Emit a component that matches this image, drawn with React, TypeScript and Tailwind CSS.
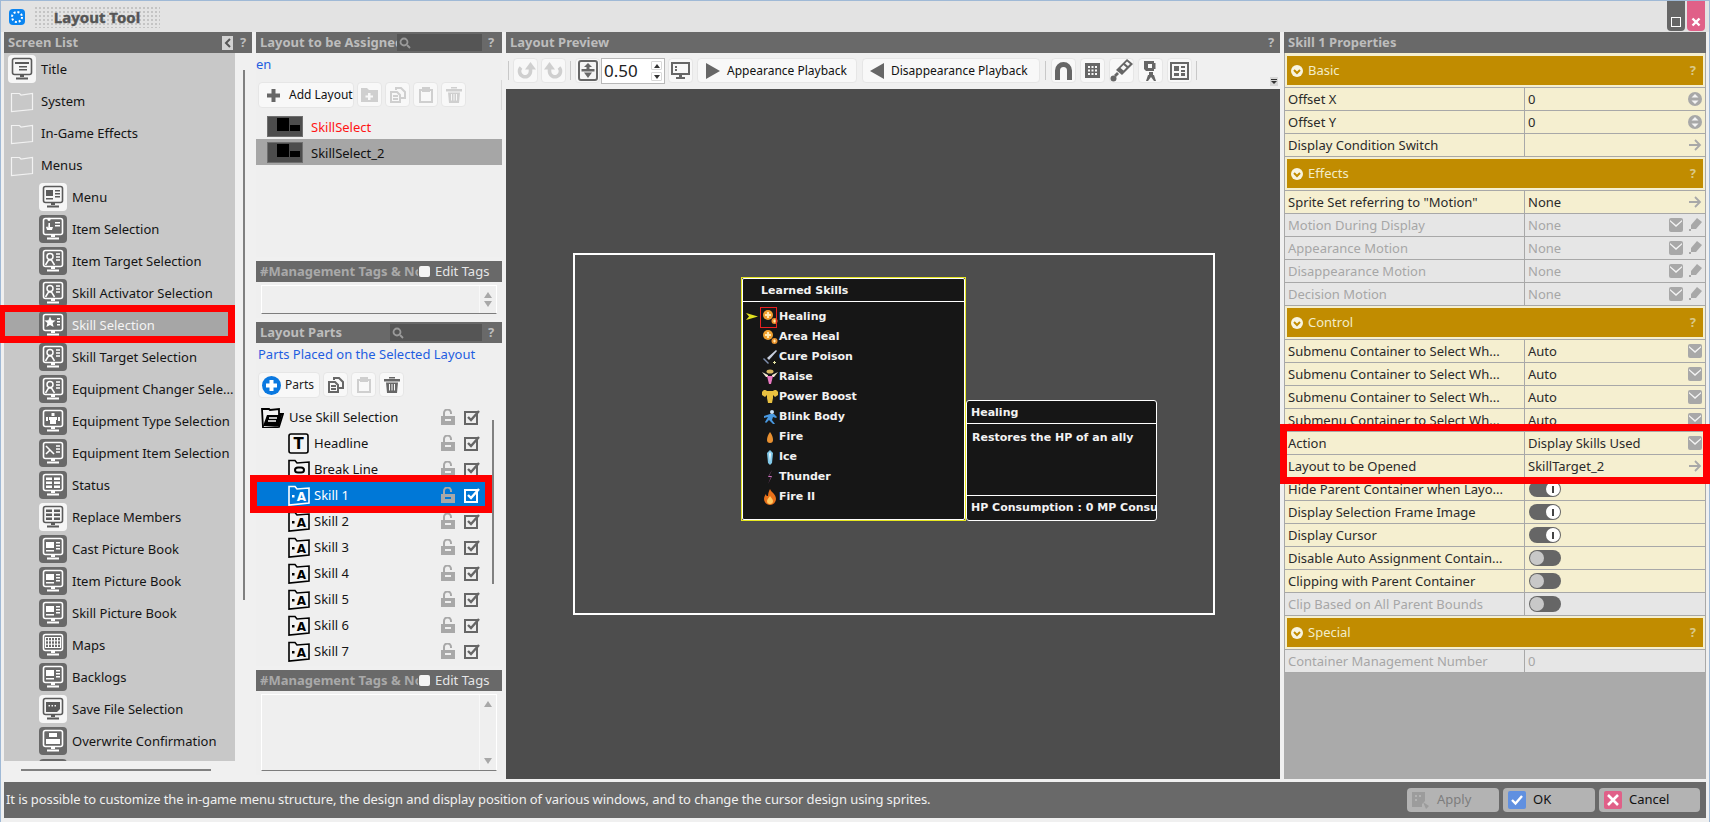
import { ReactNode } from "react";

const uiFont = "font-['Noto_Sans',sans-serif]";

type MonitorKind = "title" | "menu" | "item" | "person" | "star" | "equip" | "sword" | "table" | "book" | "grid" | "save" | "over";

const screens: { label: string; kind?: MonitorKind; light?: boolean; child?: boolean; selected?: boolean }[] = [
  { label: "Title", kind: "title", light: true },
  { label: "System" },
  { label: "In-Game Effects" },
  { label: "Menus" },
  { label: "Menu", kind: "menu", light: true, child: true },
  { label: "Item Selection", kind: "item", child: true },
  { label: "Item Target Selection", kind: "person", child: true },
  { label: "Skill Activator Selection", kind: "person", child: true },
  { label: "Skill Selection", kind: "star", child: true, selected: true },
  { label: "Skill Target Selection", kind: "person", child: true },
  { label: "Equipment Changer Sele...", kind: "person", child: true },
  { label: "Equipment Type Selection", kind: "equip", child: true },
  { label: "Equipment Item Selection", kind: "sword", child: true },
  { label: "Status", kind: "table", child: true },
  { label: "Replace Members", kind: "table", light: true, child: true },
  { label: "Cast Picture Book", kind: "book", child: true },
  { label: "Item Picture Book", kind: "book", child: true },
  { label: "Skill Picture Book", kind: "book", child: true },
  { label: "Maps", kind: "grid", child: true },
  { label: "Backlogs", kind: "book", child: true },
  { label: "Save File Selection", kind: "save", light: true, child: true },
  { label: "Overwrite Confirmation", kind: "over", child: true },
  { label: "", kind: "over", child: true },
];

function MonitorTile({ kind, light }: { kind: MonitorKind; light?: boolean }) {
  const ink = light ? "#5a5a5a" : "#ffffff";
  const bg = light ? "#f6f6f6" : "#696969";
  return (
    <svg width="28" height="28" viewBox="0 0 28 28" className="shrink-0">
      <rect width="28" height="28" rx="4" fill={bg} />
      <rect x="4.5" y="3.5" width="19" height="16" rx="2" fill="none" stroke={ink} strokeWidth="1.6" />
      <path d="M12 20h4v2h-4z" fill={ink} />
      <rect x="8" y="22.5" width="12" height="2" fill={ink} />
      {kind === "title" && <path d="M7 7h14v2H7zM11 11h8v1.5h-8zM11 14h8v1.5h-8z" fill={ink} />}
      {kind === "menu" && <path d="M7 7h7v6H7zM16 7h5v1.6h-5zM16 10h5v1.6h-5zM16 13h5v1.6h-5zM7 15h7v1.6H7z" fill={ink} />}
      {kind === "item" && <path d="M10 6a1.6 1.6 0 1 1 .01 0M9.5 8h1.5v4h3l-1 3H8l-1-3 1.4-.6.8 1.6zM16 7h5v1.5h-5zM16 10h5v1.5h-5z" fill={ink} />}
      {kind === "person" && (
        <g fill="none" stroke={ink} strokeWidth="1.5">
          <circle cx="11" cy="9.5" r="3" />
          <path d="M6.5 18l3-5h3l3 5" />
          <path d="M17 7h4M17 10h4M17 13h4" />
        </g>
      )}
      {kind === "star" && (
        <g fill={ink}>
          <path d="M11 5.5l1.6 3.7 4 .3-3 2.6 1 3.9-3.6-2.1-3.6 2.1 1-3.9-3-2.6 4-.3z" />
          <path d="M18 7h3v1.5h-3zM18 10h3v1.5h-3zM18 13h3v1.5h-3z" />
        </g>
      )}
      {kind === "equip" && <path d="M12.5 6h3v3h-3zM10 10h8v3h-1v4h-6v-4h-1zM7 10h2v4H7zM19 10h2v4h-2z" fill={ink} />}
      {kind === "sword" && (
        <g fill="none" stroke={ink} strokeWidth="1.6">
          <path d="M7 7l8 8M7 15l4-4" />
          <path d="M17 7h4M17 10h4M17 13h4" />
        </g>
      )}
      {kind === "table" && <path d="M7 6.5h6v2.5H7zM15 6.5h6v2.5h-6zM7 10.5h6V13H7zM15 10.5h6V13h-6zM7 14.5h6V17H7zM15 14.5h6V17h-6z" fill={ink} />}
      {kind === "book" && <path d="M7 7h8v6H7zM17 7h4v1.5h-4zM17 10h4v1.5h-4zM17 13h4v1.5h-4zM7 15h8v1.5H7z" fill={ink} />}
      {kind === "grid" && (
        <g fill="none" stroke={ink} strokeWidth="1">
          <rect x="6.5" y="6.5" width="15" height="10" />
          <path d="M9.5 6.5v10M12.5 6.5v10M15.5 6.5v10M18.5 6.5v10M6.5 9.8h15M6.5 13.2h15" />
        </g>
      )}
      {kind === "save" && <path d="M7 7h14v7l-3 3H7zM9.5 10h1.5v1.5H9.5zM12.5 10H14v1.5h-1.500zM15.500 10H17v1.500h-1.500z" fill={ink} fillRule="evenodd" />}
      {kind === "over" && <path d="M10 6h8v4h-8zM7 12h14v5H7z" fill={ink} />}
    </svg>
  );
}

function FolderOutline() {
  return (
    <svg width="24" height="24" viewBox="0 0 24 24" className="shrink-0">
      <path d="M1.500 4.500h8l1.500 1.500 11.500-1.500v16l-21 2z" fill="none" stroke="#f2f2f2" strokeWidth="1.200" />
    </svg>
  );
}

function PanelHeader({ title, children, help = true }: { title: string; children?: ReactNode; help?: boolean }) {
  return (
    <div className="flex h-[21px] shrink-0 items-center bg-[#696969] pl-1">
      <span className="whitespace-nowrap pt-px text-[13px] font-bold text-[#bdbdbd]">{title}</span>
      <div className="ml-auto flex items-center">
        {children}
        {help && <span className="w-[18px] text-center text-[13px] font-bold text-[#bdbdbd]">?</span>}
      </div>
    </div>
  );
}

function SearchBox({ width }: { width: string }) {
  return (
    <div className={`flex h-[17px] items-center bg-[#555555] pl-[2px] ${width}`}>
      <svg width="12" height="12" viewBox="0 0 12 12" fill="none" stroke="#9a9a9a" strokeWidth="1.800">
        <circle cx="5" cy="5" r="3.500" />
        <path d="M8 8l3 3" />
      </svg>
    </div>
  );
}

function TagPanel({ boxHeight, arrowsApart }: { boxHeight: string; arrowsApart?: boolean }) {
  return (
    <div className="flex flex-col bg-[#efefef]">
      <div className="flex h-[21px] items-center bg-[#696969] pl-1">
        <span className="w-[158px] overflow-hidden whitespace-nowrap pt-px text-[13px] font-bold text-[#a9a9a9]">#Management Tags &amp; Notes</span>
        <span className="ml-[1px] h-[11px] w-[11px] rounded-[2px] bg-[#f4f4f4]" />
        <span className="ml-[5px] text-[13px] text-[#e6e6e6]">Edit Tags</span>
      </div>
      <div className={`mx-[5px] mb-[4px] mt-[3px] flex border border-white border-b-[#7d7d7d] ${boxHeight}`}>
        <div className="flex-1" />
        <div className={`flex w-[17px] flex-col items-center border-l border-[#f8f8f8] py-[6px] ${arrowsApart ? "justify-between" : "justify-center gap-[3px]"}`}>
          <span className="h-0 w-0 border-x-[4px] border-b-[6px] border-x-transparent border-b-[#a8a8a8]" />
          <span className="h-0 w-0 border-x-[4px] border-t-[6px] border-x-transparent border-t-[#a8a8a8]" />
        </div>
      </div>
    </div>
  );
}

function ToolTile({ children, w = "w-[25px]", dim }: { children: ReactNode; w?: string; dim?: boolean }) {
  return (
    <div className={`flex h-[25px] shrink-0 items-center justify-center rounded-[4px] border border-[#e6e6e6] bg-[#f8f8f8] ${w} ${dim ? "text-[#cfcfcf]" : "text-[#666666]"}`}>
      {children}
    </div>
  );
}

const PlusIcon = () => (
  <svg width="15" height="15" viewBox="0 0 15 15" fill="currentColor">
    <path d="M5.500 1h4v4.500H14v4H9.500V14h-4V9.500H1v-4h4.500z" />
  </svg>
);
const FolderPlusIcon = () => (
  <svg width="17" height="15" viewBox="0 0 17 15" fill="currentColor">
    <path d="M0 1h6l2 2h9v12H0zM7 6v2.500H4.500v2H7V13h2.500v-2.500H12v-2H9.500V6z" fillRule="evenodd" />
  </svg>
);
const CopyIcon = () => (
  <svg width="16" height="16" viewBox="0 0 16 16" fill="none" stroke="currentColor" strokeWidth="2">
    <path d="M6 3V1h5l4 4v6h-4" />
    <path d="M1 5h6l3 3v7H1zM3 9h5M3 12h5" />
  </svg>
);
const PasteIcon = () => (
  <svg width="16" height="16" viewBox="0 0 16 16" fill="none" stroke="currentColor" strokeWidth="2">
    <path d="M2 3h12v12H2z" />
    <path d="M5 1h6v3H5z" fill="currentColor" />
  </svg>
);
const TrashIcon = () => (
  <svg width="16" height="16" viewBox="0 0 16 16" fill="currentColor">
    <path d="M0 2h16v2.500H0zM5 0h6v1.500H5zM2 5.500h12L13 16H3zM5 7v6.500h1V7zM7.500 7v6.500h1V7zM10 7v6.500h1V7z" fillRule="evenodd" />
  </svg>
);

function LockOpen() {
  return (
    <svg width="14" height="16" viewBox="0 0 14 16" className="shrink-0">
      <path d="M3 7V4a3.500 3.500 0 0 1 7 0v1" fill="none" stroke="#a8a8a8" strokeWidth="2" />
      <path d="M0 7h14v9H0zM4 10v2h6v-2z" fill="#a8a8a8" fillRule="evenodd" />
    </svg>
  );
}

function CheckBoxIcon({ white }: { white?: boolean }) {
  const ink = white ? "#ffffff" : "#666666";
  return (
    <svg width="17" height="15" viewBox="0 0 17 15" className="shrink-0" fill="none" stroke={ink}>
      <rect x="1" y="2" width="12" height="12" strokeWidth="2" />
      <path d="M4 7l3 3 8-9" strokeWidth="2.400" />
    </svg>
  );
}

function PartFolderIcon({ white, kind }: { white?: boolean; kind: "open" | "text" | "link" | "skill" }) {
  const ink = white ? "#ffffff" : "#000000";
  const fill = white ? "#0078d7" : "#f4f4f4";
  const letter = "font-['DejaVu_Sans',sans-serif] font-bold";
  if (kind === "text") {
    return (
      <svg width="21" height="21" viewBox="0 0 21 21" className="shrink-0">
        <rect x="1" y="1" width="19" height="19" rx="2" fill={fill} stroke={ink} strokeWidth="1.600" />
        <text x="10.500" y="16" textAnchor="middle" fontSize="15" fill={ink} className={letter}>T</text>
      </svg>
    );
  }
  if (kind === "open") {
    return (
      <svg width="23" height="21" viewBox="0 0 23 21" className="shrink-0">
        <path d="M1 2h7l1 1 9-1v5h4l-4 13-16 1z" fill={fill} stroke={ink} strokeWidth="1.800" />
        <path d="M6 8h15l-3 11H2z" fill={ink} />
        <path d="M8 11h8M7 14h8" stroke="#ffffff" strokeWidth="1.300" />
      </svg>
    );
  }
  return (
    <svg width="22" height="21" viewBox="0 0 22 21" className="shrink-0">
      <path d="M1 1.500h6l2 2.500 12-1v15l-20 2z" fill={fill} stroke={ink} strokeWidth="1.600" />
      {kind === "link" && <path d="M7 11a3 2.500 0 0 1 3-2.500h3a3 2.500 0 0 1 0 5h-3a3 2.500 0 0 1-3-2.500z" fill="none" stroke={ink} strokeWidth="2" />}
      {kind === "skill" && (
        <g fill={ink}>
          <rect x="4" y="10" width="2.500" height="2.500" />
          <text x="13.500" y="15.500" textAnchor="middle" fontSize="12" className={letter}>A</text>
        </g>
      )}
    </svg>
  );
}

const parts: { label: string; kind: "open" | "text" | "link" | "skill"; root?: boolean; selected?: boolean }[] = [
  { label: "Use Skill Selection", kind: "open", root: true },
  { label: "Headline", kind: "text" },
  { label: "Break Line", kind: "link" },
  { label: "Skill 1", kind: "skill", selected: true },
  { label: "Skill 2", kind: "skill" },
  { label: "Skill 3", kind: "skill" },
  { label: "Skill 4", kind: "skill" },
  { label: "Skill 5", kind: "skill" },
  { label: "Skill 6", kind: "skill" },
  { label: "Skill 7", kind: "skill" },
];

function ScreenListPanel() {
  return (
    <div className="flex w-[248px] shrink-0 flex-col bg-[#f0f0f0]">
      <PanelHeader title="Screen List">
        <span className="mr-[1px] flex h-[14px] w-[11px] items-center justify-center bg-[#d2d2d2]">
          <svg width="8" height="10" viewBox="0 0 8 10" fill="none" stroke="#555555" strokeWidth="2">
            <path d="M6 1L2 5l4 4" />
          </svg>
        </span>
      </PanelHeader>
      <div className="flex h-[708px] shrink-0">
        <div className="w-[231px] overflow-hidden bg-[#c8c8c8]">
          {screens.map((s, i) => (
            <div key={i} className={`flex h-[32px] items-center ${s.child ? "pl-[35px]" : "pl-[4px]"} ${s.selected ? "bg-[#a6a6a6]" : ""}`}>
              {s.kind ? <MonitorTile kind={s.kind} light={s.light} /> : <span className="flex w-[28px] justify-center"><FolderOutline /></span>}
              <span className={`ml-[5px] whitespace-nowrap pt-px text-[13px] ${s.selected ? "text-[#f4f4f4]" : "text-[#141414]"}`}>{s.label}</span>
            </div>
          ))}
        </div>
        <div className="flex flex-1 justify-center pl-[1px] pt-[17px]">
          <div className="h-[530px] w-[2px] bg-[#808080]" />
        </div>
      </div>
      <div className="mx-[17px] mt-[8px] h-[2px] w-[190px] bg-[#808080]" />
    </div>
  );
}

function Thumb() {
  return (
    <span className="flex h-[21px] w-[36px] shrink-0 items-start gap-[1px] border border-[#6f6f6f] bg-[#4d4d4d] pl-[9px] pt-[1px]">
      <span className="h-[13px] w-[12px] bg-black" />
      <span className="mt-[7px] h-[6px] w-[10px] bg-black" />
    </span>
  );
}

function LayoutPanel() {
  return (
    <div className="flex w-[246px] shrink-0 flex-col gap-[4px]">
      <div className="flex h-[225px] flex-col bg-[#efefef]">
        <div className="flex h-[21px] shrink-0 items-center bg-[#696969] pl-1">
          <span className="w-[137px] overflow-hidden whitespace-nowrap pt-px text-[13px] font-bold text-[#bdbdbd]">Layout to be Assigned</span>
          <SearchBox width="w-[85px]" />
          <span className="w-[18px] text-center text-[13px] font-bold text-[#bdbdbd]">?</span>
        </div>
        <div className="flex h-[27px] items-center pb-[3px] text-[13px] text-[#1f5ee0]">en</div>
        <div className="flex h-[30px] gap-[3px] border-r border-[#d8d8d8] pl-[2px] pt-[2px]">
          <div className="flex h-[26px] w-[96px] items-center gap-[8px] rounded-[4px] border border-[#e6e6e6] bg-[#f8f8f8] pl-[7px] text-[12px] text-[#111111]">
            <span className="text-[#666666]"><PlusIcon /></span>Add Layout
          </div>
          <ToolTile dim><FolderPlusIcon /></ToolTile>
          <ToolTile dim><CopyIcon /></ToolTile>
          <ToolTile dim><PasteIcon /></ToolTile>
          <ToolTile dim><TrashIcon /></ToolTile>
        </div>
        <div className="mt-[3px] flex h-[26px] items-center gap-[8px] pl-[11px] text-[13px] text-[#ff1414]"><Thumb /><span className="pt-[3px]">SkillSelect</span></div>
        <div className="flex h-[26px] items-center gap-[8px] bg-[#a6a6a6] pl-[11px] text-[13px] text-[#111111]"><Thumb /><span className="pt-[3px]">SkillSelect_2</span></div>
      </div>
      <TagPanel boxHeight="h-[29px]" />
      <div className="flex h-[344px] flex-col bg-[#efefef]">
        <div className="flex h-[21px] shrink-0 items-center bg-[#696969] pl-1">
          <span className="w-[130px] pt-px text-[13px] font-bold text-[#bdbdbd]">Layout Parts</span>
          <SearchBox width="w-[92px]" />
          <span className="w-[18px] text-center text-[13px] font-bold text-[#bdbdbd]">?</span>
        </div>
        <div className="flex h-[24px] items-center pl-[2px] text-[13px] text-[#1f5ee0]">Parts Placed on the Selected Layout</div>
        <div className="flex h-[36px] shrink-0 gap-[3px] pl-[2px] pt-[5px]">
          <div className="flex h-[26px] w-[62px] items-center gap-[4px] rounded-[4px] border border-[#e6e6e6] bg-[#f8f8f8] pl-[3px] text-[12px] text-[#222222]">
            <svg width="19" height="19" viewBox="0 0 19 19">
              <circle cx="9.500" cy="9.500" r="9.500" fill="#0a78e0" />
              <path d="M7.500 4h4v3.500H15v4h-3.500V15h-4v-3.500H4v-4h3.500z" fill="#ffffff" />
            </svg>
            Parts
          </div>
          <ToolTile><CopyIcon /></ToolTile>
          <ToolTile dim><PasteIcon /></ToolTile>
          <ToolTile><TrashIcon /></ToolTile>
        </div>
        <div className="flex min-h-0 flex-1 overflow-hidden pt-[1px]">
          <div className="w-[229px]">
            {parts.map((p) => (
              <div key={p.label} className={`flex h-[26px] items-center pr-[4px] ${p.root ? "pl-[6px]" : "pl-[32px]"} ${p.selected ? "bg-[#0078d7] text-white" : "text-[#141414]"}`}>
                <span className="flex w-[21px] shrink-0 justify-center"><PartFolderIcon kind={p.kind} white={p.selected} /></span>
                <span className={`${p.root ? "ml-[6px]" : "ml-[5px]"} whitespace-nowrap pt-px text-[13px]`}>{p.label}</span>
                <span className="ml-auto mr-[9px]"><LockOpen /></span>
                <CheckBoxIcon white={p.selected} />
              </div>
            ))}
          </div>
          <div className="flex-1 pl-[7px] pt-[16px]">
            <div className="h-[164px] w-[2px] bg-[#808080]" />
          </div>
        </div>
      </div>
      <TagPanel boxHeight="h-[77px]" arrowsApart />
    </div>
  );
}

function PreviewPanel() {
  return (
    <div className="flex w-[774px] shrink-0 flex-col">
      <PanelHeader title="Layout Preview" />
      <div className="flex h-[36px] shrink-0 items-start bg-[#f0f0f0] pt-[5px]">
        <div className="ml-[2px] mr-[4px] mt-[3px] h-[19px] w-px bg-[#c8c8c8]" />
        <div className="flex gap-[3px]">
          <ToolTile dim>
            <svg width="20" height="18" viewBox="0 0 20 18" fill="none" stroke="currentColor" strokeWidth="3.600">
              <path d="M5 5.500a5.500 5.500 0 1 0 9.500 4V7" />
              <path d="M14.500 0L20 7.500H9z" fill="currentColor" stroke="none" />
            </svg>
          </ToolTile>
          <ToolTile dim>
            <svg width="20" height="18" viewBox="0 0 20 18" fill="none" stroke="currentColor" strokeWidth="3.600">
              <path d="M15 5.500a5.500 5.500 0 1 1-9.500 4V7" />
              <path d="M5.500 0L11 7.500H0z" fill="currentColor" stroke="none" />
            </svg>
          </ToolTile>
        </div>
        <div className="mx-[4px] mt-[3px] h-[19px] w-px bg-[#c8c8c8]" />
        <ToolTile>
          <svg width="20" height="21" viewBox="0 0 20 21">
            <rect x="1" y="1" width="18" height="19" rx="2" fill="#f4f4f4" stroke="#666666" strokeWidth="2" />
            <path d="M10 3l4 4h-2.500v2h5v2.500h-13V9h5V7H6zM6 12.500h8L10 18z" fill="#666666" />
          </svg>
        </ToolTile>
        <div className="ml-[1px] flex h-[26px] w-[64px] items-center border border-[#b8b8b8] bg-white pl-[2px] text-[17px] text-[#222222]">
          0.50
          <span className="ml-auto mr-[2px] flex flex-col gap-[2px]">
            <span className="flex h-[9px] w-[11px] items-center justify-center rounded-[1px] border border-[#d8d8d8]"><span className="h-0 w-0 border-x-[3px] border-b-[4px] border-x-transparent border-b-[#333333]" /></span>
            <span className="flex h-[9px] w-[11px] items-center justify-center rounded-[1px] border border-[#d8d8d8]"><span className="h-0 w-0 border-x-[3px] border-t-[4px] border-x-transparent border-t-[#333333]" /></span>
          </span>
        </div>
        <div className="ml-[3px]">
          <ToolTile>
            <svg width="21" height="20" viewBox="0 0 21 20">
              <path d="M1 1h19v13H1zM3 3v9h15V3zM5 5h2v2H5zM5 8h2v2H5z" fill="#666666" fillRule="evenodd" />
              <path d="M9 14h3v2h3v2H6v-2h3z" fill="#666666" />
            </svg>
          </ToolTile>
        </div>
        <div className="ml-[4px] flex h-[25px] w-[160px] items-center gap-[7px] whitespace-nowrap rounded-[4px] border border-[#e6e6e6] bg-[#f8f8f8] pl-[8px] text-[12px] text-[#111111]">
          <span className="h-0 w-0 border-y-[8px] border-l-[14px] border-y-transparent border-l-[#666666]" />
          Appearance Playback
        </div>
        <div className="ml-[5px] flex h-[25px] w-[178px] items-center gap-[7px] whitespace-nowrap rounded-[4px] border border-[#e6e6e6] bg-[#f8f8f8] pl-[7px] text-[12px] text-[#111111]">
          <span className="h-0 w-0 border-y-[8px] border-r-[14px] border-y-transparent border-r-[#666666]" />
          Disappearance Playback
        </div>
        <div className="mx-[5px] mt-[3px] h-[19px] w-px bg-[#c8c8c8]" />
        <div className="flex gap-[4px]">
          <ToolTile>
            <svg width="17" height="18" viewBox="0 0 17 18" fill="currentColor">
              <path d="M0 18V8.500a8.500 8.500 0 0 1 17 0V18h-5V8.500a3.500 3.500 0 0 0-7 0V18z" />
            </svg>
          </ToolTile>
          <ToolTile>
            <svg width="15" height="15" viewBox="0 0 15 15" fill="currentColor">
              <path d="M0 0h15v15H0zM3 3v2h2V3zM6.500 3v2h2V3zM10 3v2h2V3zM3 6.500v2h2v-2zM6.500 6.500v2h2v-2zM10 6.500v2h2v-2zM3 10v2h2v-2zM6.500 10v2h2v-2zM10 10v2h2v-2z" fillRule="evenodd" />
            </svg>
          </ToolTile>
          <ToolTile>
            <svg width="23" height="23" viewBox="0 0 23 23" fill="currentColor">
              <path d="M17 0l6 5-11 11-6-5z" />
              <path d="M17 2.500l3 2.500-2 2-3-2.500zM13.500 6l3 2.500-3 3-3-2.500z" fill="#f8f8f8" />
              <path d="M7 13l2 2-3 3-2-2z" />
              <circle cx="3.500" cy="19.500" r="3" />
            </svg>
          </ToolTile>
          <ToolTile>
            <svg width="16" height="21" viewBox="0 0 16 21" fill="currentColor">
              <path d="M1 1h10v2h1.500v6H11v2H3L1 9zM5 4v4h4V4z" fillRule="evenodd" />
              <path d="M6 12h4v3H6zM5 15l-2 6h2l3-4 3 4h2l-2-6z" />
            </svg>
          </ToolTile>
          <ToolTile>
            <svg width="19" height="18" viewBox="0 0 19 18" fill="currentColor">
              <path d="M0 0h19v18H0zM2 2v14h15V2zM4 4h5v5H4zM11 4h4v2h-4zM11 8h4v2h-4zM4 11h5v3H4zM11 11h4v3h-4z" fillRule="evenodd" />
            </svg>
          </ToolTile>
        </div>
        <div className="ml-[4px] mt-[3px] h-[19px] w-px bg-[#c8c8c8]" />
        <div className="ml-auto mr-[2px] mt-[19px] flex h-[9px] w-[8px] flex-col items-center bg-[#d8d8d8]">
          <span className="mt-[2px] h-px w-[6px] bg-[#333333]" />
          <span className="mt-px h-0 w-0 border-x-[3px] border-t-[3px] border-x-transparent border-t-[#333333]" />
        </div>
      </div>
      <div className="relative flex-1 bg-[#4d4d4d]">
        <div className="absolute left-[67px] top-[164px] h-[362px] w-[642px] border-2 border-white" />
        <SkillWindow />
        <DetailWindow />
      </div>
    </div>
  );
}

const gameFont = "font-['DejaVu_Sans',sans-serif]";

function GameIcon({ kind }: { kind: string }) {
  return (
    <svg width="16" height="16" viewBox="0 0 16 16" className="shrink-0">
      {kind === "heal" && (
        <g>
          <circle cx="6" cy="6" r="5" fill="#f0a030" />
          <circle cx="12.500" cy="12" r="3" fill="#e8902a" />
          <path d="M5 3h2v2h2v2H7v2H5V7H3V5h2z" fill="#ffe8b0" />
          <path d="M12 10.500h1v1h1v1h-1v1h-1v-1h-1v-1h1z" fill="#ffe8b0" />
        </g>
      )}
      {kind === "sword" && (
        <g>
          <path d="M14 1l-9 8 2 2 8-9z" fill="#c8d0e0" />
          <path d="M2 9l5 5-1 1-5-5z" fill="#8090b0" />
          <path d="M12 12h1v1h1v1h-1v1h-1v-1h-1v-1h1z" fill="#e0e0a0" />
        </g>
      )}
      {kind === "raise" && (
        <g>
          <ellipse cx="8" cy="2.500" rx="3.500" ry="2" fill="#d8b860" />
          <path d="M0 3l6 3v2H4zM16 3l-6 3v2h2z" fill="#f0e8d0" />
          <path d="M5 7h6l-2 8H7z" fill="#e878c0" />
        </g>
      )}
      {kind === "power" && (
        <path d="M0 3a3 3 0 0 1 5-1h6a3 3 0 0 1 5 1v3l-3 2-2-2v3l-1 5H6L5 9V6L3 8 0 6z" fill="#e8c040" />
      )}
      {kind === "blink" && (
        <g>
          <circle cx="10" cy="3" r="2" fill="#c8e0f8" />
          <path d="M8 5h4l3 3-1 1-3-1-1 3 3 4h-2l-4-4-3 3-1-1 3-5-4 1V7z" fill="#4898e0" />
        </g>
      )}
      {kind === "fire" && <path d="M8 3c2 3 3 5 3 8a3 3 0 0 1-6 0c0-3 1-5 3-8z" fill="#e89030" />}
      {kind === "ice" && (
        <g>
          <path d="M8 1l3 3-1 10-2 2-2-2-1-10z" fill="#80c8e8" />
          <path d="M8 3l1 2-1 8-1-8z" fill="#f0faff" />
        </g>
      )}
      {kind === "thunder" && <path d="M10 1L6 8h3l-3 7 4-8H7z" fill="#d070c0" />}
      {kind === "fire2" && (
        <g>
          <path d="M8 0c1 3 6 5 6 10a6 6 0 0 1-12 0c0-2 1-4 2-5 0 2 1 2 2 2 0-3 1-5 2-7z" fill="#e8701a" />
          <path d="M8 7c1 2 3 3 3 5a3 3 0 0 1-6 0c0-2 2-3 3-5z" fill="#ffc860" />
        </g>
      )}
    </svg>
  );
}

const skills = [
  { label: "Healing", icon: "heal" },
  { label: "Area Heal", icon: "heal" },
  { label: "Cure Poison", icon: "sword" },
  { label: "Raise", icon: "raise" },
  { label: "Power Boost", icon: "power" },
  { label: "Blink Body", icon: "blink" },
  { label: "Fire", icon: "fire" },
  { label: "Ice", icon: "ice" },
  { label: "Thunder", icon: "thunder" },
  { label: "Fire II", icon: "fire2" },
];

function SkillWindow() {
  return (
    <div className={`absolute left-[235px] top-[188px] h-[244px] w-[225px] border border-[#e6e620] ${gameFont}`}>
      <div className="h-full rounded-[2px] border border-white bg-[#161616]">
        <div className="flex h-[23px] items-center border-b border-white pl-[18px] pt-[3px] text-[11px] font-bold text-[#f2f2f2]">Learned Skills</div>
        <div className="relative pt-[5px]">
          <svg width="12" height="7" viewBox="0 0 12 7" className="absolute left-[3px] top-[11px]">
            <path d="M0 0l12 3.500L0 7l3-3.500z" fill="#e0e020" />
          </svg>
          <div className="absolute left-[17px] top-[5px] h-[21px] w-[17px] border border-[#e82020]" />
          {skills.map((s) => (
            <div key={s.label} className="flex h-[20px] items-center pl-[19px] text-[11px] font-bold text-[#f2f2f2]">
              <GameIcon kind={s.icon} />
              <span className="ml-[1px]">{s.label}</span>
            </div>
          ))}
        </div>
      </div>
    </div>
  );
}

function DetailWindow() {
  return (
    <div className={`absolute left-[460px] top-[311px] flex h-[121px] w-[191px] flex-col overflow-hidden rounded-[3px] border border-white bg-[#161616] text-[11px] font-bold text-[#f2f2f2] ${gameFont}`}>
      <div className="flex h-[23px] shrink-0 items-center border-b border-white pl-[4px] pt-[3px]">Healing</div>
      <div className="flex-1 pl-[5px] pt-[6px]">Restores the HP of an ally</div>
      <div className="flex h-[25px] shrink-0 items-center whitespace-nowrap border-t border-white pl-[4px]">HP Consumption : 0 MP Consumption : 0</div>
    </div>
  );
}

function ArrowIcon() {
  return (
    <svg width="14" height="14" viewBox="0 0 14 14" fill="none" stroke="#a8a8a8" strokeWidth="1.800">
      <path d="M1 7h11M7 2l5 5-5 5" />
    </svg>
  );
}
function DropIcon() {
  return (
    <svg width="14" height="14" viewBox="0 0 14 14">
      <rect width="14" height="14" rx="2" fill="#a8a8a8" />
      <path d="M1 2l6 5 6-5v1.500L7 9 1 3.500z" fill="#f4f4f4" />
    </svg>
  );
}
function PenIcon() {
  return (
    <svg width="14" height="14" viewBox="0 0 14 14" fill="#a8a8a8">
      <path d="M9 0l5 4-6 7H3V7z" />
      <path d="M1 11h2v2H1z" />
    </svg>
  );
}
function SpinIcon() {
  return (
    <svg width="14" height="14" viewBox="0 0 14 14">
      <circle cx="7" cy="7" r="7" fill="#a8a8a8" />
      <path d="M7 2l3.500 3.500h-7zM7 12l3.500-3.500h-7z" fill="#f4f4f4" />
    </svg>
  );
}

function Toggle({ on }: { on: boolean }) {
  return (
    <span className={`flex h-[16px] w-[32px] items-center rounded-full bg-[#666666] px-[1px] ${on ? "justify-end" : "justify-start"}`}>
      {on ? (
        <span className="flex h-[14px] w-[14px] items-center justify-center rounded-full bg-white">
          <span className="h-[7px] w-[2px] bg-[#444444]" />
        </span>
      ) : (
        <span className="h-[14px] w-[14px] rounded-full bg-[#c8c8c8]" />
      )}
    </span>
  );
}

type Row = {
  label: string;
  value?: string;
  disabled?: boolean;
  icon?: "spin" | "arrow" | "drop" | "dropPen";
  toggle?: boolean;
};

const groups: { title: string; rows: Row[] }[] = [
  {
    title: "Basic",
    rows: [
      { label: "Offset X", value: "0", icon: "spin" },
      { label: "Offset Y", value: "0", icon: "spin" },
      { label: "Display Condition Switch", icon: "arrow" },
    ],
  },
  {
    title: "Effects",
    rows: [
      { label: 'Sprite Set referring to "Motion"', value: "None", icon: "arrow" },
      { label: "Motion During Display", value: "None", icon: "dropPen", disabled: true },
      { label: "Appearance Motion", value: "None", icon: "dropPen", disabled: true },
      { label: "Disappearance Motion", value: "None", icon: "dropPen", disabled: true },
      { label: "Decision Motion", value: "None", icon: "dropPen", disabled: true },
    ],
  },
  {
    title: "Control",
    rows: [
      { label: "Submenu Container to Select Wh...", value: "Auto", icon: "drop" },
      { label: "Submenu Container to Select Wh...", value: "Auto", icon: "drop" },
      { label: "Submenu Container to Select Wh...", value: "Auto", icon: "drop" },
      { label: "Submenu Container to Select Wh...", value: "Auto", icon: "drop" },
      { label: "Action", value: "Display Skills Used", icon: "drop" },
      { label: "Layout to be Opened", value: "SkillTarget_2", icon: "arrow" },
      { label: "Hide Parent Container when Layo...", toggle: true },
      { label: "Display Selection Frame Image", toggle: true },
      { label: "Display Cursor", toggle: true },
      { label: "Disable Auto Assignment Contain...", toggle: false },
      { label: "Clipping with Parent Container", toggle: false },
      { label: "Clip Based on All Parent Bounds", toggle: false, disabled: true },
    ],
  },
  {
    title: "Special",
    rows: [{ label: "Container Management Number", value: "0", disabled: true }],
  },
];

function PropRow({ row }: { row: Row }) {
  return (
    <div className={`flex h-[23px] items-center border-b border-[#a8a8a8] text-[13px] ${row.disabled ? "bg-[#e6e6e6] text-[#a6a6a6]" : "text-[#2a2a2a]"}`}>
      <div className="flex h-full w-[240px] shrink-0 items-center whitespace-nowrap border-r border-[#a8a8a8] pl-[3px] pt-[2px]">{row.label}</div>
      <div className="flex h-full flex-1 items-center pl-[3px] pr-[3px]">
        {row.toggle !== undefined ? <span className="pl-px"><Toggle on={row.toggle} /></span> : <span className="pt-[2px]">{row.value}</span>}
        <span className="ml-auto flex items-center gap-[5px]">
          {row.icon === "spin" && <SpinIcon />}
          {row.icon === "arrow" && <ArrowIcon />}
          {row.icon === "drop" && <DropIcon />}
          {row.icon === "dropPen" && (
            <>
              <DropIcon />
              <PenIcon />
            </>
          )}
        </span>
      </div>
    </div>
  );
}

function PropertiesPanel() {
  return (
    <div className="flex w-[422px] shrink-0 flex-col bg-[#aaaaaa]">
      <PanelHeader title="Skill 1 Properties" help={false} />
      <div className="border-x border-[#a8a8a8] bg-[#f5efd0]">
        {groups.map((g, i) => (
          <div key={g.title}>
            <div className={`border-b border-[#a8a8a8] px-[2px] pb-[2px] ${i === 0 ? "pt-[3px]" : "pt-[2px]"}`}>
              <div className="flex h-[29px] items-center bg-[#c18c00] pl-[4px] pr-[7px] text-[13px] text-[#f3ecc8]">
                <svg width="12" height="12" viewBox="0 0 12 12" className="shrink-0">
                  <circle cx="6" cy="6" r="6" fill="#f8f4e0" />
                  <path d="M3 5l3 3 3-3" fill="none" stroke="#c18c00" strokeWidth="2" />
                </svg>
                <span className="ml-[5px]">{g.title}</span>
                <span className="ml-auto font-bold text-[#d9c98a]">?</span>
              </div>
            </div>
            {g.rows.map((r, j) => (
              <PropRow key={j} row={r} />
            ))}
          </div>
        ))}
      </div>
    </div>
  );
}

function FooterButton({ label, w, children, dim }: { label: string; w: string; children: ReactNode; dim?: boolean }) {
  return (
    <div className={`flex h-[24px] items-center gap-[7px] rounded-[4px] bg-[#b3b3b3] pl-[5px] text-[13px] ${w} ${dim ? "text-[#7d7d7d]" : "text-[#111111]"}`}>
      {children}
      {label}
    </div>
  );
}

export default function App() {
  return (
    <div className={`relative h-[822px] w-[1710px] overflow-hidden ${uiFont}`}>
      <div className="flex h-full flex-col border border-b-0 border-[#9fb9d6] bg-[#f0f0f0]">
        <div className="flex h-[31px] shrink-0 items-start bg-[#e3e3e3] pl-[8px]">
          <svg width="16" height="16" viewBox="0 0 16 16" className="mt-[8px] shrink-0">
            <rect width="16" height="16" rx="4" fill="#0a84f0" />
            <circle cx="8" cy="8" r="5" fill="none" stroke="#ffffff" strokeWidth="2" strokeDasharray="2 1.900" />
          </svg>
          <div className="ml-[9px] mt-[5px] flex h-[22px] w-[126px] items-center justify-center bg-[radial-gradient(#c4c4c4_1px,transparent_1px)] bg-[length:4px_4px] text-[15px] font-bold text-[#555555] [-webkit-text-stroke:0.4px_#555555]">
            Layout Tool
          </div>
          <div className="ml-auto mr-[4px] flex gap-[2px]">
            <div className="flex h-[30px] w-[18px] items-end justify-center rounded-b-[4px] bg-[#666666] pb-[4px]">
              <span className="h-[10px] w-[10px] border border-white" />
            </div>
            <div className="flex h-[30px] w-[18px] items-end justify-center rounded-b-[4px] bg-[#e06088] pb-[4px]">
              <svg width="10" height="10" viewBox="0 0 10 10" stroke="#ffffff" strokeWidth="2.400">
                <path d="M1.500 1.500l7 7M8.500 1.500l-7 7" />
              </svg>
            </div>
          </div>
        </div>
        <div className="flex h-[747px] shrink-0 gap-[4px] pl-[3px]">
          <ScreenListPanel />
          <LayoutPanel />
          <PreviewPanel />
          <PropertiesPanel />
        </div>
        <div className="ml-[3px] mt-[3px] flex h-[36px] w-[1702px] items-center gap-[4px] bg-[#696969] pl-[2px] pr-[6px] text-[13px] text-[#f0f0f0]">
          <span className="tracking-[-0.1px]">It is possible to customize the in-game menu structure, the design and display position of various windows, and to change the cursor design using sprites.</span>
          <div className="ml-auto"><FooterButton label="Apply" w="w-[92px]" dim>
            <svg width="18" height="18" viewBox="0 0 18 18" fill="#9c9c9c">
              <path d="M0 1h13v9l-3 3v3H0zM3 4v2h2V4zM7 4v2h2V4zM3 8v2h2V8zM11 11l6 4-3 3z" fillRule="evenodd" />
            </svg>
          </FooterButton></div>
          <FooterButton label="OK" w="w-[92px]">
            <svg width="18" height="18" viewBox="0 0 18 18">
              <rect width="18" height="18" rx="2" fill="#6090e0" />
              <path d="M4 9l3.500 3.500L14 5" fill="none" stroke="#ffffff" strokeWidth="2.400" />
            </svg>
          </FooterButton>
          <FooterButton label="Cancel" w="w-[101px]">
            <svg width="18" height="18" viewBox="0 0 18 18">
              <rect width="18" height="18" rx="2" fill="#e06088" />
              <path d="M4 4l10 10M14 4L4 14" stroke="#ffffff" strokeWidth="2.600" />
            </svg>
          </FooterButton>
        </div>
      </div>
      {/* red callouts drawn on top of the tool */}
      <div className="pointer-events-none absolute left-0 top-[305px] h-[38px] w-[235px] border-y-[7px] border-l-[5px] border-r-[7px] border-[#ff0000]" />
      <div className="pointer-events-none absolute left-[250px] top-[475px] h-[38px] w-[242px] border-[7px] border-[#ff0000]" />
      <div className="pointer-events-none absolute left-[1280px] top-[424px] h-[60px] w-[430px] border-[7px] border-[#ff0000]" />
    </div>
  );
}
